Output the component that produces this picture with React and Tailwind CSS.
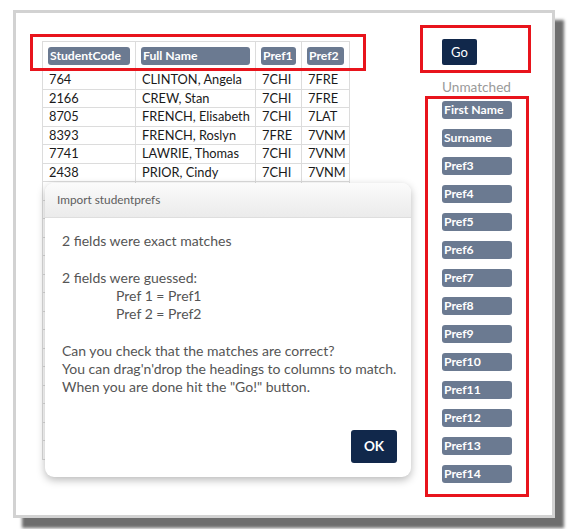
import React from "react";

const rows = [
  ["764", "CLINTON, Angela", "7CHI", "7FRE"],
  ["2166", "CREW, Stan", "7CHI", "7FRE"],
  ["8705", "FRENCH, Elisabeth", "7CHI", "7LAT"],
  ["8393", "FRENCH, Roslyn", "7FRE", "7VNM"],
  ["7741", "LAWRIE, Thomas", "7CHI", "7VNM"],
  ["2438", "PRIOR, Cindy", "7CHI", "7VNM"],
];
const blankRows = Array.from({ length: 15 }, () => ["", "", "", ""]);
const allRows = [...rows, ...blankRows];

const headers = ["StudentCode", "Full Name", "Pref1", "Pref2"];

const unmatched = [
  "First Name",
  "Surname",
  "Pref3",
  "Pref4",
  "Pref5",
  "Pref6",
  "Pref7",
  "Pref8",
  "Pref9",
  "Pref10",
  "Pref11",
  "Pref12",
  "Pref13",
  "Pref14",
];

export default function App() {
  return (
    <div
      className="w-[571px] h-[529px] bg-white overflow-hidden pt-[10px] pl-[13px]"
      style={{ fontFamily: 'Lato, "Open Sans", sans-serif' }}
    >
      <div className="relative w-[542px] h-[508px] border-[3px] border-[#d2d2d2] bg-white shadow-[9px_10px_3px_#6e6e6e] flex">
        {/* left: table */}
        <div className="pl-[26px] pt-[28px] shrink-0">
          <table className="table-fixed w-[307px] border-collapse text-[12.8px] text-[#1a1a1a] leading-none">
            <colgroup>
              <col className="w-[93px]" />
              <col className="w-[120px]" />
              <col className="w-[46px]" />
              <col className="w-[48px]" />
            </colgroup>
            <thead>
              <tr className="h-[29px]">
                {headers.map((h) => (
                  <th
                    key={h}
                    className="border border-[#dcdcdc] px-[5px] py-0 text-left font-normal"
                  >
                    <div className="h-[18px] rounded-[3px] bg-[#6b7a91] text-white font-bold text-[12.2px] leading-[18px] pl-[2px] whitespace-nowrap overflow-hidden">
                      {h}
                    </div>
                  </th>
                ))}
              </tr>
            </thead>
            <tbody>
              {allRows.map((r, ri) => (
                <tr key={ri} className="h-[18.5px]">
                  {r.map((c, ci) => (
                    <td
                      key={ci}
                      className="border border-[#dcdcdc] px-[6px] py-0 whitespace-nowrap overflow-hidden"
                    >
                      {c}
                    </td>
                  ))}
                </tr>
              ))}
            </tbody>
          </table>
        </div>

        {/* right column */}
        <div className="ml-[92px] pt-[26px] flex flex-col items-start">
          <button className="h-[26px] w-[35px] rounded-[2px] bg-[#11284b] text-white text-[13px] leading-none">
            Go
          </button>
          <div className="mt-[14px] text-[13.6px] leading-[16px] text-[#9a9a9a]">
            Unmatched
          </div>
          <div className="mt-[6px] flex flex-col gap-[10px]">
            {unmatched.map((u) => (
              <div
                key={u}
                className="w-[70px] h-[18px] rounded-[3px] bg-[#6b7a91] text-white font-bold text-[12.2px] leading-[18px] pl-[2px] whitespace-nowrap"
              >
                {u}
              </div>
            ))}
          </div>
        </div>

        {/* annotation boxes */}
        <div className="absolute left-[14px] top-[21px] w-[336px] h-[37px] border-[3px] border-[#e8141c]" />
        <div className="absolute left-[404px] top-[12px] w-[111px] h-[48px] border-[3px] border-[#e8141c]" />
        <div className="absolute left-[409px] top-[83px] w-[104px] h-[401px] border-[3px] border-[#e8141c]" />

        {/* dialog */}
        <div className="absolute left-[29px] top-[170px] w-[366px] h-[294px] rounded-[9px] bg-white shadow-[0_3px_8px_rgba(0,0,0,0.28)] flex flex-col overflow-hidden">
          <div className="h-[35px] shrink-0 bg-gradient-to-b from-[#fbfbfb] to-[#ebebeb] border-b border-[#dedede] pl-[12px] flex items-center text-[11.8px] text-[#5e5e5e]">
            Import studentprefs
          </div>
          <div className="flex-1 pl-[17px] pt-[14px] text-[14px] leading-[18.3px] text-[#555] whitespace-nowrap">
            <div>2 fields were exact matches</div>
            <div className="h-[18.3px]" />
            <div>2 fields were guessed:</div>
            <div className="pl-[54px]">Pref 1 = Pref1</div>
            <div className="pl-[54px]">Pref 2 = Pref2</div>
            <div className="h-[18.3px]" />
            <div>Can you check that the matches are correct?</div>
            <div>You can drag'n'drop the headings to columns to match.</div>
            <div>When you are done hit the "Go!" button.</div>
          </div>
          <div className="flex justify-end pr-[14px] pb-[14px]">
            <button className="w-[46px] h-[33px] rounded-[3px] bg-[#11284b] text-white font-bold text-[13.5px]">
              OK
            </button>
          </div>
        </div>
      </div>
    </div>
  );
}
